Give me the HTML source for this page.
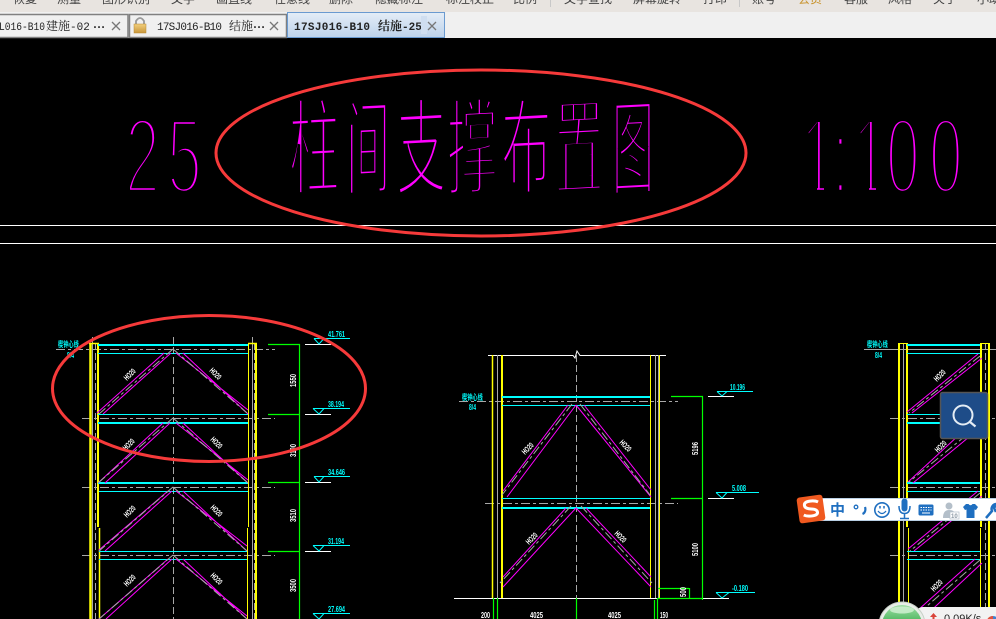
<!DOCTYPE html>
<html lang="zh"><head><meta charset="utf-8"><title>CAD</title>
<style>
html,body{margin:0;padding:0;width:996px;height:619px;overflow:hidden;background:#000}
svg{position:absolute;left:0;top:0;display:block}
.m{font:12px "Liberation Sans","Noto Sans CJK SC",sans-serif;fill:#444}
.t{font:13px "Liberation Serif","Noto Serif CJK SC",serif;fill:#222}
.tl{font:11px "Liberation Mono","Noto Serif CJK SC",monospace;fill:#222}
.h{font-family:"Noto Sans CJK SC",sans-serif;font-size:105px;fill:#f0f;stroke:#000;stroke-width:5.100px}
.d{font-family:"Liberation Sans",sans-serif;font-size:108px;fill:#f0f;stroke:#000;stroke-width:6.600px}
.w{font:bold 8px "Liberation Sans",sans-serif;fill:#fff}
.c{font:bold 8px "Liberation Sans",sans-serif;fill:#0ff}
.cn{font:bold 8px "Noto Sans CJK SC",sans-serif;fill:#0ff}
.gd{stroke:#a8a8a8;stroke-width:1;stroke-dasharray:9 3 3 3;fill:none}
.gs{stroke:#a8a8a8;stroke-width:1;fill:none}
.gl{stroke:#a8a8a8;stroke-width:1;stroke-dasharray:7 3;fill:none}
.y{stroke:#ff0;fill:none}
.cy{stroke:#0ff;fill:none}
.mg{stroke:#f0f;stroke-width:1;fill:none}
.gr{stroke:#0f0;stroke-width:1.200;fill:none}
.wl{stroke:#fff;stroke-width:1;fill:none}
</style></head><body>
<svg width="996" height="619" viewBox="0 0 996 619" xmlns="http://www.w3.org/2000/svg">
<defs>
<linearGradient id="tb" x1="0" y1="0" x2="0" y2="1"><stop offset="0" stop-color="#e4edf7"/><stop offset="1" stop-color="#bdd2ea"/></linearGradient>
<linearGradient id="lk" x1="0" y1="0" x2="0" y2="1"><stop offset="0" stop-color="#f2cf7d"/><stop offset="1" stop-color="#c8963a"/></linearGradient>
<linearGradient id="ball" x1="0" y1="0" x2="0" y2="1"><stop offset="0" stop-color="#9fe0a5"/><stop offset=".5" stop-color="#3fae52"/><stop offset="1" stop-color="#2a9a40"/></linearGradient>
</defs>
<rect width="996" height="619" fill="#000"/>

<!-- title -->
<g class="h">
<text transform="translate(289,187) skewY(-3) scale(.48,1)">柱</text>
<text transform="translate(346,187) skewY(-3) scale(.42,1)">间</text>
<text transform="translate(396,187) skewY(-3) scale(.48,1)">支</text>
<text transform="translate(447,187) skewY(-3) scale(.48,1)">撑</text>
<text transform="translate(501,187) skewY(-3) scale(.48,1)">布</text>
<text transform="translate(555,187) skewY(-3) scale(.46,1)">置</text>
<text transform="translate(612,187) skewY(-3) scale(.40,1)">图</text>
</g>
<g class="d">
<text transform="translate(125,193) scale(.58,1)">2</text>
<text transform="translate(167,193) scale(.58,1)">5</text>
<text transform="translate(801,193) scale(.56,1)">1</text>
<text transform="translate(832,193) scale(.56,1)">:</text>
<text transform="translate(853,193) scale(.56,1)">1</text>
<text transform="translate(886,193) scale(.56,1)">0</text>
<text transform="translate(929,193) scale(.56,1)">0</text>
</g>
<path d="M800 183H817V198H800zM824 183H838V198H824zM852 183H869V198H852zM876 183H888V198H876z" fill="#000"/>
<path class="wl" d="M0 225.500H996M0 243.500H996"/>

<!-- left frame -->
<g>
<path class="gs" d="M92.500 337V619M252.500 337V619"/>
<path class="gl" d="M95.500 343V619M254.500 343V619M173.500 337V619"/>
<path class="gd" d="M56 349.500H275M82 418.500H275M82 487.500H275M82 555.500H275"/>
<path class="y" stroke-width="2.500" d="M90.500 343V619"/>
<path class="y" stroke-width="2" d="M98 343V527M256 343V619"/>
<path class="y" stroke-width="1.500" d="M99.500 528V619M89 343.500H99M248 343.500H257"/>
<path class="y" stroke-width="1" d="M248.500 343V527M247.500 528V619"/>
<path class="cy" stroke-width="2" d="M98 345H248M98 423H248M98 483H248"/>
<path class="cy" stroke-width="1" d="M98 353.500H248M98 414.500H248M99 491.500H248M99 551.500H247M99 559.500H247"/>
<path class="mg" d="M164 353 97 413M171 353 103 414M176 353 248 410M183 353 248 414M163 423 98 483M170 423 105 483M176 423 248 480M183 423 248 483M168 491 99 550M172 491 105 551M176 491 247 546M183 491 247 551M168 559 99 619M172 559 106 619M176 559 247 616M183 559 247 619"/>
<path class="gd" d="M173 349 99 414M173 349 247 413M173 418 98 483M173 418 248 483M173 487 99 551M173 487 247 551M173 555 99 619M173 555 247 619"/>
<path class="gr" d="M299.500 344V619M268 344.500H300M268 414.500H300M268 482.500H300M268 551.500H300"/>
<path class="wl" d="M305 344.500H331M305 414.500H331M305 482.500H331M305 551.500H331"/>
<path class="cy" d="M314 338.500H350M314 338.500 319 344 324 338.500M313 408.500H350M313 408.500 319 414 324 408.500M314 476.500H350M314 476.500 319 482 324 476.500M313 545.500H350M313 545.500 319 551 324 545.500M313 613.500H350M313 613.500 319 619 324 613.500"/>
<g class="c">
<text x="328" y="337" textLength="17" lengthAdjust="spacingAndGlyphs">41.761</text><text x="328" y="407" textLength="16" lengthAdjust="spacingAndGlyphs">38.194</text><text x="328" y="475" textLength="17" lengthAdjust="spacingAndGlyphs">34.646</text><text x="328" y="544" textLength="16" lengthAdjust="spacingAndGlyphs">31.194</text><text x="328" y="612" textLength="17" lengthAdjust="spacingAndGlyphs">27.694</text>
</g>
<text class="w" transform="translate(296,387) rotate(-90)" textLength="13" lengthAdjust="spacingAndGlyphs">1550</text>
<text class="w" transform="translate(296,457) rotate(-90)" textLength="13" lengthAdjust="spacingAndGlyphs">3100</text>
<text class="w" transform="translate(296,522) rotate(-90)" textLength="13" lengthAdjust="spacingAndGlyphs">3510</text>
<text class="w" transform="translate(296,592) rotate(-90)" textLength="13" lengthAdjust="spacingAndGlyphs">3500</text>
<text class="w" transform="translate(127,381) rotate(-45)" textLength="13" lengthAdjust="spacingAndGlyphs">HO20</text><text class="w" transform="translate(209,371) rotate(45)" textLength="13" lengthAdjust="spacingAndGlyphs">HO20</text>
<text class="w" transform="translate(126,451) rotate(-45)" textLength="13" lengthAdjust="spacingAndGlyphs">HO20</text><text class="w" transform="translate(210,440) rotate(45)" textLength="13" lengthAdjust="spacingAndGlyphs">HO20</text>
<text class="w" transform="translate(127,518) rotate(-45)" textLength="13" lengthAdjust="spacingAndGlyphs">HO20</text><text class="w" transform="translate(210,508) rotate(45)" textLength="13" lengthAdjust="spacingAndGlyphs">HO20</text>
<text class="w" transform="translate(127,587) rotate(-45)" textLength="13" lengthAdjust="spacingAndGlyphs">HO20</text><text class="w" transform="translate(210,576) rotate(45)" textLength="13" lengthAdjust="spacingAndGlyphs">HO20</text>
<text class="cn" transform="translate(58,347) scale(.65,1)">楔钟心线</text><text class="c" x="67" y="358" textLength="7" lengthAdjust="spacingAndGlyphs">8/4</text>
</g>

<!-- middle frame -->
<g>
<path class="wl" d="M488 355.500H573L575 358 577 351 580 355.500H666M454 598.500H729"/>
<path class="gs" d="M497.500 355V598M655.500 355V598M658.500 355V598"/>
<path class="gl" d="M576.500 355V619"/>
<path class="gd" d="M459 401.500H678M485 503.500H678"/>
<path class="y" stroke-width="1.500" d="M492.500 355V598"/>
<path class="y" stroke-width="2" d="M502 355V598"/>
<path class="y" stroke-width="1" d="M650.500 355V598M659.500 355V598"/>
<path class="cy" stroke-width="2" d="M502 397H650M502 508H650"/>
<path class="cy" stroke-width="1" d="M502 405.500H650M502 498.500H650"/>
<path class="mg" d="M568 405 503 491M576 405 507 497M576 405 651 497M584 405 651 490M566 508 503 577M576 508 503 587M576 508 651 587M586 508 651 577"/>
<path class="gd" d="M572 404 502 495M580 404 650 495M571 506 500 583M581 506 652 583"/>
<path class="gr" d="M702.500 396V600M671 396.500H703M671 498.500H703M658 598.500H703M658 588.500H689M689.500 588V598M493.500 598V619M497.500 598V619M576.500 598V619M654.500 600V619M657.500 598V619"/>
<path class="wl" d="M708 396.500H734M708 498.500H734"/>
<path class="cy" d="M717 391.500H753M717 391.500 722 396 727 391.500M716 492.500H759M716 492.500 722 498 727 492.500M716 592.500H755M716 592.500 722 598 729 592.500"/>
<text class="c" x="730" y="390" textLength="15" lengthAdjust="spacingAndGlyphs">10.196</text><text class="c" x="732" y="491" textLength="14" lengthAdjust="spacingAndGlyphs">5.008</text><text class="c" x="732" y="591" textLength="16" lengthAdjust="spacingAndGlyphs">-0.180</text>
<text class="w" transform="translate(698,455) rotate(-90)" textLength="13" lengthAdjust="spacingAndGlyphs">5196</text>
<text class="w" transform="translate(698,556) rotate(-90)" textLength="13" lengthAdjust="spacingAndGlyphs">5100</text>
<text class="w" transform="translate(686,597) rotate(-90)" textLength="10" lengthAdjust="spacingAndGlyphs">500</text>
<text class="w" x="481" y="618" textLength="9" lengthAdjust="spacingAndGlyphs">200</text><text class="w" x="530" y="618" textLength="13" lengthAdjust="spacingAndGlyphs">4025</text><text class="w" x="608" y="618" textLength="13" lengthAdjust="spacingAndGlyphs">4025</text><text class="w" x="660" y="618" textLength="8" lengthAdjust="spacingAndGlyphs">150</text>
<text class="w" transform="translate(525,455) rotate(-45)" textLength="13" lengthAdjust="spacingAndGlyphs">HO20</text><text class="w" transform="translate(619,443) rotate(45)" textLength="13" lengthAdjust="spacingAndGlyphs">HO20</text>
<text class="w" transform="translate(529,545) rotate(-45)" textLength="13" lengthAdjust="spacingAndGlyphs">HO20</text><text class="w" transform="translate(614,534) rotate(45)" textLength="13" lengthAdjust="spacingAndGlyphs">HO20</text>
<text class="cn" transform="translate(462,400) scale(.65,1)">楔钟心线</text><text class="c" x="469" y="410" textLength="7" lengthAdjust="spacingAndGlyphs">8/4</text>
</g>

<!-- right frame -->
<g>
<path class="gs" d="M903.500 343V619M864 349.500H996"/>
<path class="gl" d="M985.500 343V619"/>
<path class="gd" d="M864 349.500H996M890 418.500H996M890 487.500H996M890 555.500H996"/>
<path class="y" stroke-width="2" d="M899 343V619M907 343V527M981 343V527M989 343V619"/>
<path class="y" stroke-width="1" d="M899 343.500H908M981 343.500H990M908.500 528V619M980.500 528V619"/>
<path class="cy" stroke-width="2" d="M907 345H980M907 423H980M907 483H980"/>
<path class="cy" stroke-width="1" d="M907 353.500H980M907 414.500H980M907 491.500H980M907 551.500H980M907 559.500H980"/>
<path class="mg" d="M978 354 907 412M982 358 912 413M972 423 908 482M980 428 913 483M978 491 908 549M982 496 914 551M975 559 908 619M982 563 922 619"/>
<path class="gd" d="M980 356 909 413M980 424 909 482M980 493 910 551M980 560 912 619"/>
<text class="w" transform="translate(937,382) rotate(-45)" textLength="13" lengthAdjust="spacingAndGlyphs">HO20</text><text class="w" transform="translate(938,453) rotate(-45)" textLength="13" lengthAdjust="spacingAndGlyphs">HO20</text>
<text class="w" transform="translate(934,592) rotate(-45)" textLength="13" lengthAdjust="spacingAndGlyphs">HO20</text>
<text class="cn" transform="translate(867,347) scale(.65,1)">楔钟心线</text><text class="c" x="875" y="358" textLength="7" lengthAdjust="spacingAndGlyphs">8/4</text>
</g>

<!-- red ellipses -->
<ellipse cx="481" cy="153" rx="265" ry="83" fill="none" stroke="#f63a3a" stroke-width="3"/>
<ellipse cx="209" cy="388.500" rx="156.500" ry="73" fill="none" stroke="#f63a3a" stroke-width="3"/>

<!-- menu -->
<rect width="996" height="12" fill="#e8e4e0"/>
<rect y="12" width="996" height="26" fill="#f0f0f0"/>
<g class="m">
<text x="13" y="3">恢复</text><text x="57" y="3">测量</text><text x="102" y="3">图形识别</text><text x="171" y="3">文字</text><text x="216" y="3">画直线</text><text x="274" y="3">任意线</text><text x="329" y="3">删除</text><text x="375" y="3">隐藏标注</text><text x="446" y="3">标注校正</text><text x="513" y="3">比例</text><text x="564" y="3">文字查找</text><text x="633" y="3">屏幕旋转</text><text x="703" y="3">打印</text><text x="752" y="3">账号</text><text x="798" y="3" style="fill:#c8922a">会员</text><text x="844" y="3">客服</text><text x="888" y="3">风格</text><text x="933" y="3">关于</text><text x="977" y="3">小助手</text>
</g>
<path d="M550.500 0V7M739.500 0V7" stroke="#c8c8c8"/>

<!-- tabs -->
<rect x="-3" y="14.500" width="131" height="23" fill="#f0f0f0" stroke="#808080" stroke-width="1.500"/>
<rect x="129.500" y="14.500" width="157" height="23" fill="#f0f0f0" stroke="#808080" stroke-width="1.500"/>
<rect x="287.500" y="12.500" width="157" height="25" fill="url(#tb)" stroke="#6a9ad0"/>
<text class="tl" x="-1" y="30" textLength="46" lengthAdjust="spacingAndGlyphs">L016-B10</text>
<text class="t" x="46" y="30" style="font-size:12px">建施</text>
<text class="tl" x="70" y="30">-02</text>
<text class="t" x="93" y="28" style="font-size:12px;font-weight:bold">…</text>
<path d="M112 22 120 30M120 22 112 30" stroke="#777" stroke-width="1.300" fill="none"/>
<path d="M136 24v-3q4-6 8 0v3" fill="none" stroke="#999" stroke-width="1.800"/>
<rect x="134" y="24" width="12" height="9" fill="url(#lk)" stroke="#b8882e" stroke-width=".5"/>
<text class="tl" x="157" y="30" textLength="65" lengthAdjust="spacing">17SJ016-B10</text>
<text class="t" x="229" y="30" style="font-size:12px">结施</text>
<text class="t" x="253" y="28" style="font-size:12px;font-weight:bold">…</text>
<path d="M270 22 278 30M278 22 270 30" stroke="#777" stroke-width="1.300" fill="none"/>
<text class="tl" x="294" y="30" textLength="76" lengthAdjust="spacing" style="font-weight:bold">17SJ016-B10</text>
<text class="t" x="378" y="30" style="font-size:12px;font-weight:bold">结施</text>
<text class="tl" x="402" y="30" style="font-weight:bold">-25</text>
<rect x="421" y="16" width="6" height="18" fill="#cfdef0"/>
<path d="M428 22 436 30M436 22 428 30" stroke="#777" stroke-width="1.300" fill="none"/>

<!-- search button -->
<rect x="940.500" y="392.500" width="47" height="46" rx="2" fill="#1e4c88" stroke="#555" stroke-width="1.500"/>
<circle cx="963" cy="415" r="9.500" fill="none" stroke="#e4ecf4" stroke-width="2"/>
<path d="M970 422 975.500 426.500" stroke="#e4ecf4" stroke-width="2.200" fill="none"/>

<!-- sogou bar -->
<rect x="815" y="498.500" width="190" height="22" fill="#fff" stroke="#b9cfe4"/>
<g transform="rotate(-8 811 509)">
<rect x="798" y="496" width="26" height="26" rx="3" fill="#f0591f"/>
<path d="M819 503q-3-2-8-2-6 0-6 3.500t6 4.500q6 1 6 4t-6 3q-5 0-8-2" fill="none" stroke="#fff" stroke-width="3"/>
</g>
<text x="830" y="515" style="font:bold 15px 'Noto Sans CJK SC',sans-serif;fill:#1f6fc0">中</text>
<circle cx="856" cy="507" r="1.800" fill="none" stroke="#1f6fc0" stroke-width="1.300"/>
<path d="M865 507c1 3 0 6-2.500 7" fill="none" stroke="#1f6fc0" stroke-width="2.200"/>
<circle cx="882" cy="510" r="7.200" fill="none" stroke="#1f6fc0" stroke-width="1.600"/>
<path d="M878 511q4 5 8 0" fill="none" stroke="#1f6fc0" stroke-width="1.300"/><path d="M880 506v2.500M884 506v2.500" stroke="#1f6fc0" stroke-width="1.500"/>
<rect x="901.500" y="498.500" width="6" height="13" rx="3" fill="#1f6fc0"/>
<path d="M899 506q0 7.500 5.500 7.500t5.500-7.500M904.500 514v4M900 518.500H909" fill="none" stroke="#1f6fc0" stroke-width="1.500"/>
<rect x="918.500" y="504.500" width="15" height="11" rx="1.500" fill="#1f6fc0"/>
<path d="M920.500 507.500H931.500M920.500 510H931.500" stroke="#fff" stroke-dasharray="1.500 1"/><path d="M922 513H930" stroke="#fff"/>
<circle cx="949" cy="506" r="3.500" fill="#b4bfc9"/><path d="M943 518q0-8 6-8t5 4v4z" fill="#b4bfc9"/>
<rect x="950" y="512" width="9" height="7" fill="#fff" stroke="#b4bfc9" stroke-width=".7"/>
<text x="951" y="518" style="font:bold 6px 'Liberation Sans',sans-serif;fill:#8a97a3">10</text>
<path d="M966 504 963 507 965 510 966.500 509.500V518H974.500V509.500L976 510 978 507 975 504 972.500 504Q970.500 506.500 968.500 504z" fill="#1f6fc0"/>
<path d="M986 518 992 511A5 5 0 0 1 997 504L994 508 996 512" fill="none" stroke="#1f6fc0" stroke-width="2.500"/>

<!-- speed ball -->
<rect x="915" y="607" width="90" height="20" rx="8" fill="#f2f2f2"/>
<circle cx="902" cy="625" r="23" fill="#e8eee8" stroke="#c6cfc6"/>
<circle cx="902" cy="625" r="20" fill="url(#ball)"/>
<ellipse cx="902" cy="610" rx="12" ry="3.500" fill="#d4f2d6" opacity=".8"/>
<path d="M933.500 613 930 617H932.500V620H934.500V617H937z" fill="#d9433a"/>
<text x="944" y="622" style="font:11px 'Liberation Sans',sans-serif;fill:#222">0.09K/s</text>
<circle cx="993" cy="622" r="6" fill="#3f7fd0"/><path d="M987 620a6 6 0 0 1 6-4v6z" fill="#e0533d"/>
</svg>
</body></html>
